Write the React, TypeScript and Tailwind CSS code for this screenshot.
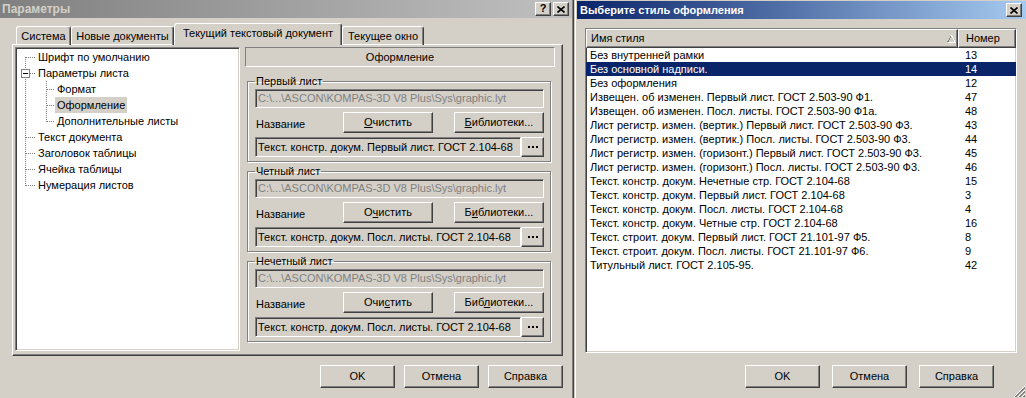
import React from "react";

const raised =
  "border border-t-white border-l-white border-r-[#404040] border-b-[#404040] shadow-[inset_-1px_-1px_0_#808080] bg-[#d4d0c8]";
const sunken =
  "border border-t-[#808080] border-l-[#808080] border-r-white border-b-white shadow-[inset_1px_1px_0_#404040,inset_-1px_-1px_0_#d4d0c8]";

const PATH = "C:\\...\\ASCON\\KOMPAS-3D V8 Plus\\Sys\\graphic.lyt";

const styles: [string, string][] = [
  ["Без внутренней рамки", "13"],
  ["Без основной надписи.", "14"],
  ["Без оформления", "12"],
  ["Извещен. об изменен. Первый лист. ГОСТ 2.503-90 Ф1.", "47"],
  ["Извещен. об изменен. Посл. листы. ГОСТ 2.503-90 Ф1а.", "48"],
  ["Лист регистр. измен. (вертик.) Первый лист. ГОСТ 2.503-90 Ф3.", "43"],
  ["Лист регистр. измен. (вертик.) Посл. листы. ГОСТ 2.503-90 Ф3.", "44"],
  ["Лист регистр. измен. (горизонт.) Первый лист. ГОСТ 2.503-90 Ф3.", "45"],
  ["Лист регистр. измен. (горизонт.) Посл. листы. ГОСТ 2.503-90 Ф3.", "46"],
  ["Текст. констр. докум. Нечетные стр. ГОСТ 2.104-68", "15"],
  ["Текст. констр. докум. Первый лист. ГОСТ 2.104-68", "3"],
  ["Текст. констр. докум. Посл. листы. ГОСТ 2.104-68", "4"],
  ["Текст. констр. докум. Четные стр. ГОСТ 2.104-68", "16"],
  ["Текст. строит. докум. Первый лист. ГОСТ 21.101-97 Ф5.", "8"],
  ["Текст. строит. докум. Посл. листы. ГОСТ 21.101-97 Ф6.", "9"],
  ["Титульный лист. ГОСТ 2.105-95.", "42"],
];

type Kind = "first" | "mid" | "last" | "expander" | "child" | "lastChild";

const tree: { label: string; kind: Kind; selected?: boolean }[] = [
  { label: "Шрифт по умолчанию", kind: "first" },
  { label: "Параметры листа", kind: "expander" },
  { label: "Формат", kind: "child" },
  { label: "Оформление", kind: "child", selected: true },
  { label: "Дополнительные листы", kind: "lastChild" },
  { label: "Текст документа", kind: "mid" },
  { label: "Заголовок таблицы", kind: "mid" },
  { label: "Ячейка таблицы", kind: "mid" },
  { label: "Нумерация листов", kind: "last" },
];

const dot = { stroke: "#808080", strokeWidth: 1, strokeDasharray: "1 1" };

function Gutter({ kind }: { kind: Kind }) {
  if (kind === "child" || kind === "lastChild") {
    return (
      <svg width="39" height="16" shapeRendering="crispEdges" className="shrink-0">
        <line x1="9.5" y1="0" x2="9.5" y2="16" {...dot} />
        <line x1="30.5" y1="0" x2="30.5" y2={kind === "lastChild" ? 9 : 16} {...dot} />
        <line x1="31" y1="8.5" x2="39" y2="8.5" {...dot} />
      </svg>
    );
  }
  if (kind === "expander") {
    return (
      <svg width="22" height="16" shapeRendering="crispEdges" className="shrink-0">
        <line x1="9.5" y1="0" x2="9.5" y2="4" {...dot} />
        <line x1="9.5" y1="14" x2="9.5" y2="16" {...dot} />
        <rect x="5.5" y="4.5" width="8" height="8" fill="#fff" stroke="#808080" />
        <line x1="7" y1="8.5" x2="12" y2="8.5" stroke="#000" />
        <line x1="14" y1="8.5" x2="20" y2="8.5" {...dot} />
      </svg>
    );
  }
  return (
    <svg width="22" height="16" shapeRendering="crispEdges" className="shrink-0">
      <line
        x1="9.5"
        y1={kind === "first" ? 8 : 0}
        x2="9.5"
        y2={kind === "last" ? 9 : 16}
        {...dot}
      />
      <line x1="10" y1="8.5" x2="20" y2="8.5" {...dot} />
    </svg>
  );
}

function TitleBar({ title, active }: { title: string; active?: boolean }) {
  return (
    <div
      className={
        active
          ? "flex h-[18px] items-center bg-[linear-gradient(to_right,#0a246a,#a6caf0)] pl-[3px] pr-[4px] text-[11px] text-white"
          : "flex h-[18px] items-center bg-[linear-gradient(to_right,#808080,#c0c0c0)] pl-[2px] pr-[3px] text-[12px] text-[#d4d0c8]"
      }
    >
      <span className="font-bold">{title}</span>
      <div className="ml-auto flex gap-[2px]">
        {!active && (
          <div className={`${raised} flex h-[14px] w-[16px] items-center justify-center pb-[1px] text-[11px] font-bold text-black`}>
            ?
          </div>
        )}
        <div className={`${raised} flex h-[14px] w-[16px] items-center justify-center`}>
          <svg width="8" height="7" viewBox="0 0 8 7">
            <path d="M0.5 0.5 L7.5 6.5 M7.5 0.5 L0.5 6.5" stroke="#000" strokeWidth="1.6" />
          </svg>
        </div>
      </div>
    </div>
  );
}

function Dots() {
  return (
    <svg width="10" height="2" shapeRendering="crispEdges">
      <rect x="0" y="0" width="2" height="2" fill="#000" />
      <rect x="4" y="0" width="2" height="2" fill="#000" />
      <rect x="8" y="0" width="2" height="2" fill="#000" />
    </svg>
  );
}

function Group({
  title,
  clear,
  lib,
  value,
  first,
}: {
  title: string;
  clear: React.ReactNode;
  lib: React.ReactNode;
  value: string;
  first?: boolean;
}) {
  return (
    <fieldset
      className={`${first ? "mt-[8px]" : "mt-[3px]"} ml-[2px] w-[304px] border border-[#808080] pb-[4px] pl-[7px] pr-[6px] pt-[1px] shadow-[inset_1px_1px_0_#fff,1px_1px_0_#fff]`}
    >
      <legend className="px-[1px] leading-[13px]">{title}</legend>
      <div className={`${sunken} flex h-[19px] items-center overflow-hidden whitespace-nowrap bg-[#d4d0c8] pl-[2px] text-[#808080]`}>
        {PATH}
      </div>
      <div className="mt-[4px] flex h-[21px] items-center">
        <span className="w-[88px] pl-[1px] pt-[3px]">Название</span>
        <button className={`${raised} h-[21px] w-[90px]`}>{clear}</button>
        <button className={`${raised} ml-[21px] h-[21px] w-[90px]`}>{lib}</button>
      </div>
      <div className="mt-[4px] flex h-[20px]">
        <div className={`${sunken} flex w-[266px] items-center overflow-hidden whitespace-nowrap bg-[#d4d0c8] pl-[2px]`}>
          {value}
        </div>
        <button className={`${raised} flex w-[23px] items-center justify-center`}>
          <Dots />
        </button>
      </div>
    </fieldset>
  );
}

function Tab({ label, w, selected }: { label: string; w: string; selected?: boolean }) {
  return (
    <div
      className={
        selected
          ? `relative z-10 flex h-[22px] ${w} justify-center rounded-t-[3px] border-l border-r border-t border-l-white border-r-[#404040] border-t-white bg-[#d4d0c8] pt-[3px] shadow-[inset_-1px_0_0_#808080]`
          : `flex h-[19px] ${w} justify-center rounded-t-[3px] border-l border-r border-t border-l-white border-r-[#404040] border-t-white pt-[3px] shadow-[inset_-1px_0_0_#808080]`
      }
    >
      {label}
    </div>
  );
}

function LeftDialog() {
  return (
    <div className="flex w-[574px] shrink-0 border-r border-r-[#404040]">
      <div className="flex flex-1 flex-col border-r border-r-[#808080]">
        <TitleBar title="Параметры" />
        <div className="ml-[12px] mt-[5px] w-[551px]">
          <div className="-mb-px flex h-[22px] items-end pl-[4px]">
            <Tab label="Система" w="w-[55px]" />
            <Tab label="Новые документы" w="w-[103px]" />
            <Tab label="Текущий текстовый документ" w="w-[168px]" selected />
            <Tab label="Текущее окно" w="w-[82px]" />
          </div>
          <div className="flex h-[312px] items-start border border-b-[#404040] border-l-white border-r-[#404040] border-t-white pl-[2px] shadow-[inset_-1px_-1px_0_#808080]">
            <div className={`${sunken} mt-[2px] h-[304px] w-[225px] bg-white`}>
              <div className="pt-[1px]">
                {tree.map((r) => (
                  <div key={r.label} className="flex h-[16px] items-center">
                    <Gutter kind={r.kind} />
                    {r.selected ? (
                      <span className="bg-[#d4d0c8] px-[2px] leading-[16px]">{r.label}</span>
                    ) : (
                      <span className={r.kind === "child" || r.kind === "lastChild" ? "pl-[2px]" : ""}>{r.label}</span>
                    )}
                  </div>
                ))}
              </div>
            </div>
            <div className="ml-[5px] mt-[2px] flex w-[310px] flex-col">
              <div className="flex h-[20px] items-center justify-center border border-b-white border-l-[#808080] border-r-white border-t-[#808080]">
                Оформление
              </div>
              <Group
                first
                title="Первый лист"
                clear={<><u>О</u>чистить</>}
                lib={<><u>Б</u>иблиотеки...</>}
                value="Текст. констр. докум. Первый лист. ГОСТ 2.104-68"
              />
              <Group
                title="Четный лист"
                clear={<>О<u>ч</u>истить</>}
                lib={<>Б<u>и</u>блиотеки...</>}
                value="Текст. констр. докум. Посл. листы. ГОСТ 2.104-68"
              />
              <Group
                title="Нечетный лист"
                clear={<>Очи<u>с</u>тить</>}
                lib={<>Биб<u>л</u>иотеки...</>}
                value="Текст. констр. докум. Посл. листы. ГОСТ 2.104-68"
              />
            </div>
          </div>
        </div>
        <div className="mt-[9px] flex justify-end gap-[9px] pr-[9px]">
          <button className={`${raised} h-[23px] w-[75px]`}>OK</button>
          <button className={`${raised} h-[23px] w-[75px]`}>Отмена</button>
          <button className={`${raised} h-[23px] w-[75px]`}>Справка</button>
        </div>
      </div>
    </div>
  );
}

function RightDialog() {
  return (
    <div className="relative flex flex-1 flex-col pl-[1px]">
      <div className="flex flex-1 flex-col border-l border-l-white pl-[1px]">
        <div className="mt-[1px]">
          <TitleBar title="Выберите стиль оформления" active />
        </div>
        <div className={`${sunken} mx-[8px] mt-[9px] h-[325px] w-[432px] bg-white`}>
          <div className="flex h-[19px]">
            <div className={`${raised} flex w-[372px] items-center justify-between pl-[4px] pr-[1px]`}>
              <span>Имя стиля</span>
              <svg width="9" height="8" shapeRendering="crispEdges">
                <line x1="0.5" y1="7.5" x2="4.5" y2="0.5" stroke="#808080" />
                <line x1="4.5" y1="0.5" x2="8.5" y2="7.5" stroke="#fff" />
                <line x1="0.5" y1="7.5" x2="8.5" y2="7.5" stroke="#fff" />
              </svg>
            </div>
            <div className={`${raised} flex flex-1 items-center pl-[7px]`}>Номер</div>
          </div>
          {styles.map(([name, num], i) => (
            <div
              key={name}
              className={i === 1 ? "flex h-[14px] items-center bg-[#0a246a] text-white" : "flex h-[14px] items-center"}
            >
              <span className="w-[372px] whitespace-nowrap pl-[4px]">{name}</span>
              <span className="pl-[7px]">{num}</span>
            </div>
          ))}
        </div>
        <div className="mt-[12px] flex justify-end gap-[12px] pr-[32px]">
          <button className={`${raised} h-[23px] w-[75px]`}>OK</button>
          <button className={`${raised} h-[23px] w-[75px]`}>Отмена</button>
          <button className={`${raised} h-[23px] w-[75px]`}>Справка</button>
        </div>
      </div>
      <svg width="12" height="12" className="absolute bottom-[1px] right-[1px]">
        <path d="M1 12 L12 1 M5 12 L12 5 M9 12 L12 9" stroke="#fff" />
        <path d="M2 12 L12 2 M3 12 L12 3 M6 12 L12 6 M7 12 L12 7 M10 12 L12 10 M11 12 L12 11" stroke="#808080" />
      </svg>
    </div>
  );
}

export default function App() {
  return (
    <div className="flex h-[398px] w-[1026px] overflow-hidden bg-[#d4d0c8] font-['Liberation_Sans',Arial,sans-serif] text-[11px] leading-[13px] text-black">
      <LeftDialog />
      <RightDialog />
    </div>
  );
}
